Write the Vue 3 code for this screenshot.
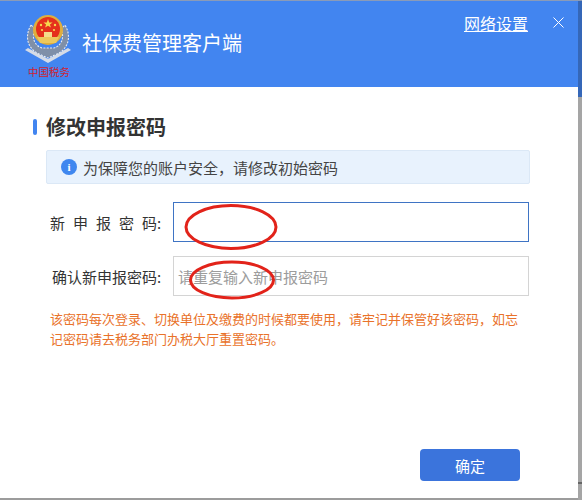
<script setup>
const title = '社保费管理客户端'
</script>

<template>
  <div class="page">
    <div class="window">
      <header class="head">
        <div class="logo">
          <svg class="emblem" width="48" height="52" viewBox="0 0 48 52">
            <path d="M1 37 L24 50 L47 37 L44 35 L24 46 L4 35 Z" fill="#d5dbe6" />
            <path d="M7 12 C0 24 4 36 15 41 L24 45 L33 41 C44 36 48 24 41 12 L37 16 C41 25 37 33 30 35 L18 35 C11 33 7 25 11 16 Z" fill="#7f8fa8" stroke="#e6eaf1" stroke-width="1.1" stroke-dasharray="2 1.3" />
            <circle cx="24" cy="17" r="15" fill="#dfae3e" />
            <circle cx="24" cy="16" r="12" fill="#e5301c" />
            <path d="M13 24 H35 L32 30 H16 Z" fill="#edc85c" />
            <path d="M20 19 H28 V24 H20 Z" fill="#f4dc8a" />
            <path d="M24 6 L25.2 9.4 L28.6 9.4 L25.9 11.4 L26.9 14.6 L24 12.7 L21.1 14.6 L22.1 11.4 L19.4 9.4 L22.8 9.4 Z" fill="#f6d94e" />
            <circle cx="17" cy="12" r="1.2" fill="#f6d94e" />
            <circle cx="31" cy="12" r="1.2" fill="#f6d94e" />
            <circle cx="18" cy="17" r="1.1" fill="#f6d94e" />
            <circle cx="30" cy="17" r="1.1" fill="#f6d94e" />
          </svg>
          <span class="tax">中国税务</span>
        </div>
        <h1 class="title">{{ title }}</h1>
        <a class="net">网络设置</a>
        <svg class="close" width="11" height="11" viewBox="0 0 11 11">
          <path d="M0.5 0.5 L10.5 10.5 M10.5 0.5 L0.5 10.5" stroke="#fff" stroke-width="1" fill="none" />
        </svg>
      </header>

      <main class="body">
        <div class="heading">
          <i class="bar"></i>
          <h2>修改申报密码</h2>
        </div>

        <div class="notice">
          <span class="info">i</span>
          <span>为保障您的账户安全，请修改初始密码</span>
        </div>

        <div class="row first">
          <label class="spread"><span class="wide">新申报密</span>码:</label>
          <div class="field focus"></div>
        </div>
        <div class="row second">
          <label>确认新申报密码:</label>
          <div class="field"><span class="ph">请重复输入新申报密码</span></div>
        </div>

        <p class="hint">该密码每次登录、切换单位及缴费的时候都要使用，请牢记并保管好该密码，如忘记密码请去税务部门办税大厅重置密码。</p>

        <div class="actions">
          <button class="ok">确定</button>
        </div>
      </main>

      <svg class="mark m1" width="96" height="50" viewBox="0 0 96 50">
        <ellipse cx="48" cy="25" rx="45" ry="21.5" fill="none" stroke="#e2231a" stroke-width="3" />
      </svg>
      <svg class="mark m2" width="90" height="42" viewBox="0 0 90 42">
        <ellipse cx="45" cy="21" rx="41.5" ry="18" fill="none" stroke="#e2231a" stroke-width="3" />
      </svg>
    </div>
    <div class="behind"></div>
  </div>
</template>

<style>
html, body { margin: 0; background: #fff; }
</style>

<style scoped>
.page {
  width: 582px;
  height: 500px;
  overflow: hidden;
  display: flex;
  align-items: flex-start;
  background: #9c9c9c;
  font-family: "Noto Sans CJK SC", "Liberation Sans", sans-serif;
}
.window {
  position: relative;
  width: 578px;
  height: 498px;
  flex: none;
  background: #fff;
  display: flex;
  flex-direction: column;
}
.behind {
  flex: 1;
  height: 500px;
  background: linear-gradient(#8a9bb8 0 1px, #3567b8 1px 97px, #a5a5a5 97px 482px, #666 482px 484px, #a5a5a5 484px);
}
.head {
  height: 86px;
  flex: none;
  background: #4285f0;
  border-top: 1px solid #8a9bb8;
  display: flex;
  align-items: flex-start;
  color: #fff;
}
.logo {
  width: 48px;
  margin: 12px 0 0 24px;
  display: flex;
  flex-direction: column;
  align-items: center;
}
.tax {
  margin-top: 0;
  padding-left: 2px;
  font-size: 10.5px;
  line-height: 13px;
  white-space: nowrap;
  color: #cf2330;
  font-weight: 400;
}
.title {
  margin: 24px 0 0 10px;
  font-size: 20px;
  line-height: 36px;
  font-weight: 400;
}
.net {
  margin: 11px 0 0 auto;
  font-size: 16px;
  line-height: 22px;
  text-decoration: underline;
}
.close {
  margin: 16px 14px 0 25px;
}
.body {
  flex: 1;
  display: flex;
  flex-direction: column;
  padding: 0 48px 0 33px;
}
.heading {
  display: flex;
  align-items: center;
  margin-top: 26px;
  height: 28px;
}
.bar {
  width: 4px;
  height: 16px;
  border-radius: 2px;
  background: #4285f0;
  margin-right: 9px;
}
h2 {
  margin: 0;
  font-size: 20px;
  line-height: 28px;
  font-weight: 700;
  color: #333;
}
.notice {
  margin: 9px 0 0 13px;
  height: 34px;
  background: #e8f2fd;
  border: 1px solid #dbe8f6;
  box-sizing: border-box;
  display: flex;
  align-items: center;
  font-size: 15px;
  color: #444;
  padding-left: 14px;
  gap: 6px;
  border-radius: 2px;
}
.info {
  width: 16px;
  height: 16px;
  border-radius: 50%;
  background: #3f87ef;
  color: #fff;
  font: 700 11px/16px "Liberation Serif", serif;
  text-align: center;
}
.row {
  display: flex;
  align-items: center;
  font-size: 15px;
  color: #333;
}
.row label {
  width: 140px;
  box-sizing: border-box;
  padding-left: 19px;
  white-space: nowrap;
}
.row .spread {
  padding-left: 17px;
}
.wide {
  letter-spacing: 8px;
}
.first { margin-top: 18px; }
.second { margin-top: 14px; }
.field {
  width: 356px;
  height: 40px;
  box-sizing: border-box;
  border: 1px solid #d4d4d4;
  display: flex;
  align-items: center;
  padding-left: 4px;
}
.focus { border-color: #3f74c4; }
.ph {
  color: #9c9c9c;
  font-size: 15px;
}
.hint {
  margin: 13px 0 0 17px;
  font-size: 13px;
  line-height: 20px;
  color: #e9722a;
  width: 472px;
}
.actions {
  margin-top: auto;
  margin-bottom: 17px;
  display: flex;
  justify-content: flex-end;
  margin-right: 10px;
}
.ok {
  width: 100px;
  height: 32px;
  border: 0;
  border-radius: 4px;
  background: #3b74dc;
  color: #fff;
  font: 15px "Noto Sans CJK SC", sans-serif;
}
.mark {
  position: absolute;
  pointer-events: none;
}
.m1 { left: 183px; top: 202px; }
.m2 { left: 187px; top: 259px; }
</style>
